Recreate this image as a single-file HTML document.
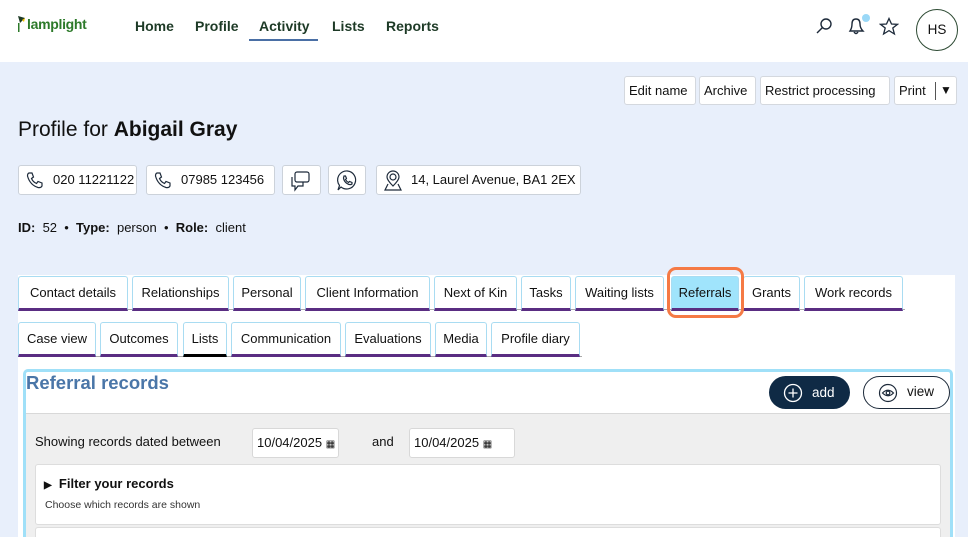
<!DOCTYPE html>
<html style="overflow:hidden;height:537px"><head><meta charset="utf-8"><style>
*{box-sizing:border-box;margin:0;padding:0}
body{width:968px;height:537px;overflow:hidden;background:#e8effb;font-family:"Liberation Sans",sans-serif;color:#111;position:relative;white-space:nowrap}
.a{position:absolute}
.hdr{left:0;top:0;width:968px;height:62px;background:#fff}
.nav{top:18px;font-size:14px;font-weight:bold;color:#1d3a26}
.btn{position:absolute;top:76px;height:29px;background:#fff;border:1px solid #d4d8de;border-radius:3px;font-size:13px;line-height:27px;padding:0 4px;color:#111}
.chip{position:absolute;top:165px;height:30px;background:#fff;border:1px solid #ccd2da;border-radius:3px;font-size:13px;line-height:28px;color:#111}
.tab{position:absolute;height:35px;background:#fff;border:1px solid #a9dcf2;border-bottom:3px solid #5a2d82;border-radius:3px 3px 0 0;font-size:13px;line-height:31px;text-align:center;color:#111}
</style></head><body>
<div class="a hdr"></div>
<svg class="a" style="left:17px;top:14px" width="10" height="20" viewBox="0 0 10 20"><path d="M1 2 L8 4 L3 9Z" fill="#1d3a26"/><path d="M5 6 L8 4 L7 8Z" fill="#f2c200"/><rect x="1" y="9" width="1.5" height="9" fill="#2d7a2a"/></svg>
<div class="a" style="left:27px;top:16px;font-size:14px;color:#2d7a2a;font-weight:bold;letter-spacing:-0.3px">lamplight</div>
<div class="a nav" style="left:135px">Home</div>
<div class="a nav" style="left:195px">Profile</div>
<div class="a nav" style="left:259px">Activity</div>
<div class="a" style="left:249px;top:39px;width:69px;height:2px;background:#4a6fa5"></div>
<div class="a nav" style="left:332px">Lists</div>
<div class="a nav" style="left:386px">Reports</div>
<svg class="a" style="left:814px;top:16px" width="20" height="20" viewBox="0 0 20 20" fill="none" stroke="#1d2a3a" stroke-width="1.4"><circle cx="12" cy="8" r="5"/><path d="M8.5 11.5 L3 17"/></svg>
<svg class="a" style="left:845px;top:15px" width="24" height="22" viewBox="0 0 24 22" fill="none" stroke="#1d2a3a" stroke-width="1.4"><path d="M5 16 Q7 13 7 9 Q7 4 11 4 Q15 4 15 9 Q15 13 18 16Z"/><path d="M9 17 Q11 20 13 17"/></svg>
<div class="a" style="left:862px;top:14px;width:8px;height:8px;border-radius:50%;background:#9ad8f7"></div>
<svg class="a" style="left:879px;top:17px" width="20" height="19" viewBox="0 0 20 19" fill="none" stroke="#1d2a3a" stroke-width="1.3"><path d="M10 1.5 L12.5 7 L18.5 7.3 L13.8 11 L15.4 17 L10 13.6 L4.6 17 L6.2 11 L1.5 7.3 L7.5 7Z"/></svg>
<div class="a" style="left:916px;top:9px;width:42px;height:42px;border:1.5px solid #2d4a33;border-radius:50%;text-align:center;line-height:39px;font-size:13.5px">HS</div>

<div class="btn" style="left:624px;width:72px">Edit name</div>
<div class="btn" style="left:699px;width:57px">Archive</div>
<div class="btn" style="left:760px;width:130px">Restrict processing</div>
<div class="btn" style="left:894px;width:63px">Print<span style="position:absolute;left:40px;top:5px;width:1px;height:18px;background:#555"></span><span style="position:absolute;left:45px;top:0;font-size:12px">▼</span></div>

<div class="a" style="left:18px;top:118px;font-size:21px">Profile for <b>Abigail Gray</b></div>

<svg width="0" height="0" style="position:absolute"><defs><path id="ph" d="M4 2 L7 2 L8.5 6 L6.5 7.5 Q8 11 11.5 12.5 L13 10.5 L17 12 L17 15 Q16 17 13 16.5 Q5 14 2.5 5 Q2.5 2.5 4 2Z" fill="none" stroke="#1d2a3a" stroke-width="1.2"/></defs></svg>
<div class="chip" style="left:18px;width:119px"><svg style="position:absolute;left:6px;top:5px" width="19" height="19"><use href="#ph"/></svg><span style="position:absolute;left:34px">020 11221122</span></div>
<div class="chip" style="left:146px;width:129px"><svg style="position:absolute;left:6px;top:5px" width="19" height="19"><use href="#ph"/></svg><span style="position:absolute;left:34px">07985 123456</span></div>
<div class="chip" style="left:282px;width:39px"><svg style="position:absolute;left:6px;top:4px" width="24" height="22" fill="none" stroke="#1d2a3a" stroke-width="1.2"><rect x="6" y="2" width="14" height="10" rx="2"/><path d="M3 7 L3 16 L6 16 L6 20 L9 16 L14 16 L14 12"/></svg></div>
<div class="chip" style="left:328px;width:38px"><svg style="position:absolute;left:7px;top:3px" width="23" height="23" fill="none" stroke="#1d2a3a" stroke-width="1.2"><path d="M11.5 2 A9 9 0 1 1 5 18 L2 21 L3.5 16.5 A9 9 0 0 1 11.5 2Z"/><path d="M8 7 L9.5 7 L10.5 9.5 L9.5 10.5 Q10.5 12.5 12.5 13.5 L13.5 12.5 L16 13.5 L16 15 Q14 16.5 11 14.5 Q8 12.5 7.5 9 Z"/></svg></div>
<div class="chip" style="left:376px;width:205px"><svg style="position:absolute;left:6px;top:4px" width="20" height="22" fill="none" stroke="#1d2a3a" stroke-width="1.2"><circle cx="10" cy="7" r="3"/><path d="M10 16 Q4 10 4 7 A6 6 0 0 1 16 7 Q16 10 10 16Z"/><path d="M5 14 L2 20 L18 20 L15 14"/></svg><span style="position:absolute;left:34px">14, Laurel Avenue, BA1 2EX</span></div>

<div class="a" style="left:18px;top:220px;font-size:13px"><b>ID:</b>&nbsp; 52 &nbsp;•&nbsp; <b>Type:</b>&nbsp; person &nbsp;•&nbsp; <b>Role:</b>&nbsp; client</div>

<div class="a" style="left:18px;top:275px;width:937px;height:262px;background:#fff"></div>
<div class="a" style="left:18px;top:309px;width:887px;height:1px;background:#aaa"></div>
<div class="a" style="left:18px;top:356px;width:564px;height:1px;background:#aaa"></div>

<div class="tab" style="top:276px;left:18px;width:110px">Contact details</div>
<div class="tab" style="top:276px;left:132px;width:97px">Relationships</div>
<div class="tab" style="top:276px;left:233px;width:68px">Personal</div>
<div class="tab" style="top:276px;left:305px;width:125px">Client Information</div>
<div class="tab" style="top:276px;left:434px;width:83px">Next of Kin</div>
<div class="tab" style="top:276px;left:521px;width:50px">Tasks</div>
<div class="tab" style="top:276px;left:575px;width:89px">Waiting lists</div>
<div class="tab" style="top:276px;left:671px;width:68px;background:#a0e4fc">Referrals</div>
<div class="tab" style="top:276px;left:743px;width:57px">Grants</div>
<div class="tab" style="top:276px;left:804px;width:99px">Work records</div>
<div class="a" style="left:667px;top:267px;width:77px;height:51px;border:3px solid #f57a45;border-radius:9px"></div>

<div class="tab" style="top:322px;left:18px;width:78px">Case view</div>
<div class="tab" style="top:322px;left:100px;width:78px">Outcomes</div>
<div class="tab" style="top:322px;left:183px;width:44px;border-bottom-color:#000">Lists</div>
<div class="tab" style="top:322px;left:231px;width:110px">Communication</div>
<div class="tab" style="top:322px;left:345px;width:86px">Evaluations</div>
<div class="tab" style="top:322px;left:435px;width:52px">Media</div>
<div class="tab" style="top:322px;left:491px;width:89px">Profile diary</div>

<div class="a" style="left:23px;top:369px;width:930px;height:180px;border:3px solid #a0e0f8;border-radius:5px;background:#fff"></div>
<div class="a" style="left:26px;top:372px;font-size:18.5px;font-weight:bold;color:#4a76a8">Referral records</div>
<div class="a" style="left:769px;top:376px;width:81px;height:33px;border-radius:17px;background:#0f2a45;color:#fff;font-size:13.5px;line-height:33px"><svg style="position:absolute;left:14px;top:7px" width="20" height="20" fill="none" stroke="#fff" stroke-width="1.3"><circle cx="10" cy="10" r="8.5"/><path d="M10 5.5V14.5M5.5 10H14.5"/></svg><span style="position:absolute;left:43px">add</span></div>
<div class="a" style="left:863px;top:376px;width:87px;height:33px;border-radius:17px;border:1.3px solid #1d2a3a;background:#fff;font-size:13.5px;line-height:30px"><svg style="position:absolute;left:14px;top:6px" width="20" height="20" fill="none" stroke="#1d2a3a" stroke-width="1.2"><circle cx="10" cy="10" r="8.5"/><path d="M4.5 10 Q10 4.5 15.5 10 Q10 15.5 4.5 10Z"/><circle cx="10" cy="10" r="1.8"/></svg><span style="position:absolute;left:43px">view</span></div>

<div class="a" style="left:26px;top:413px;width:924px;height:124px;background:#efefef;border-top:1px solid #d8d8d8"></div>
<div class="a" style="left:35px;top:434px;font-size:13px">Showing records dated between</div>
<div class="a" style="left:252px;top:428px;width:87px;height:30px;background:#fff;border:1px solid #d8d8d8;border-radius:3px;font-size:13px;line-height:28px;padding-left:4px">10/04/2025 <span style="font-size:10px">▦</span></div>
<div class="a" style="left:372px;top:434px;font-size:13px">and</div>
<div class="a" style="left:409px;top:428px;width:106px;height:30px;background:#fff;border:1px solid #d8d8d8;border-radius:3px;font-size:13px;line-height:28px;padding-left:4px">10/04/2025 <span style="font-size:10px">▦</span></div>
<div class="a" style="left:35px;top:464px;width:906px;height:61px;background:#fff;border:1px solid #ddd;border-radius:3px"></div>
<div class="a" style="left:44px;top:476px;font-size:13px;font-weight:bold"><span style="font-size:10px">▶</span>&nbsp; Filter your records</div>
<div class="a" style="left:45px;top:499px;font-size:10.5px;color:#333">Choose which records are shown</div>
<div class="a" style="left:35px;top:527px;width:906px;height:20px;background:#fff;border:1px solid #ddd;border-radius:3px"></div>
</body></html>
